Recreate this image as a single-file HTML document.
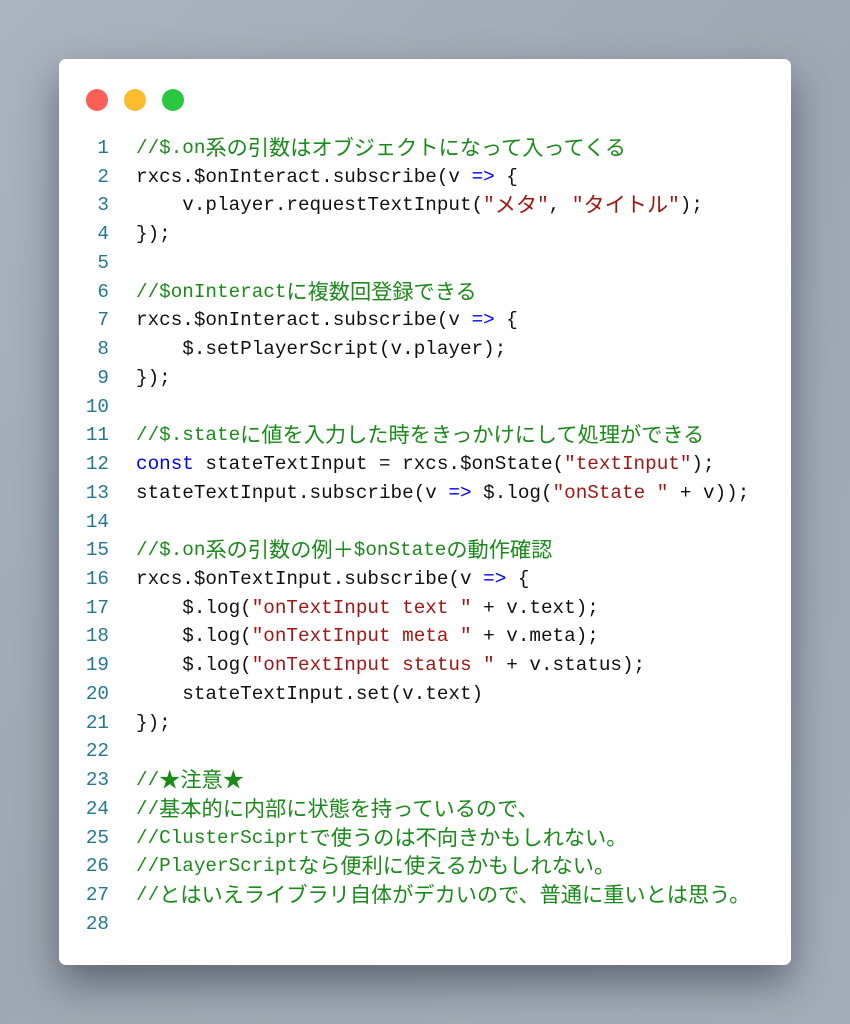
<!DOCTYPE html>
<html><head><meta charset="utf-8"><style>
html,body{margin:0;padding:0;}
body{width:850px;height:1024px;overflow:hidden;background:linear-gradient(135deg,#aab4be 0%,#9ea8b2 50%,#a4aeb8 100%);position:relative;}
.card{position:absolute;left:59px;top:59px;width:732px;height:906px;background:#fff;border-radius:7px;box-shadow:0 18px 40px rgba(40,48,58,.55);}
.dot{position:absolute;top:89px;width:22px;height:22px;border-radius:50%;}
.code{position:absolute;left:0;top:134px;width:850px;font-family:"Liberation Mono","Noto Sans CJK JP",monospace;font-size:19.3px;color:#111;}
.l{height:28.74px;line-height:28.74px;white-space:pre;position:relative;}
.n{position:absolute;left:60px;width:49px;text-align:right;color:#237893;}
.t{position:absolute;left:136px;}
.c{color:#1a8a1a}.k{color:#0000ff}.s{color:#a31515}
.j{font-family:"Noto Sans CJK JP",sans-serif;font-size:21.2px;line-height:0;position:relative;top:2px;}
</style></head><body>
<div class="card"></div>
<div class="dot" style="left:86px;background:#fd5f57"></div>
<div class="dot" style="left:124px;background:#febb2d"></div>
<div class="dot" style="left:162px;background:#28c840"></div>
<div class="code">
<div class="l"><span class="n">1</span><span class="t c">//$.on<span class="j">系の引数はオブジェクトになって入ってくる</span></span></div>
<div class="l"><span class="n">2</span><span class="t">rxcs.$onInteract.subscribe(v <span class="k">=&gt;</span> {</span></div>
<div class="l"><span class="n">3</span><span class="t">    v.player.requestTextInput(<span class="s">"<span class="j">メタ</span>"</span>, <span class="s">"<span class="j">タイトル</span>"</span>);</span></div>
<div class="l"><span class="n">4</span><span class="t">});</span></div>
<div class="l"><span class="n">5</span></div>
<div class="l"><span class="n">6</span><span class="t c">//$onInteract<span class="j">に複数回登録できる</span></span></div>
<div class="l"><span class="n">7</span><span class="t">rxcs.$onInteract.subscribe(v <span class="k">=&gt;</span> {</span></div>
<div class="l"><span class="n">8</span><span class="t">    $.setPlayerScript(v.player);</span></div>
<div class="l"><span class="n">9</span><span class="t">});</span></div>
<div class="l"><span class="n">10</span></div>
<div class="l"><span class="n">11</span><span class="t c">//$.state<span class="j">に値を入力した時をきっかけにして処理ができる</span></span></div>
<div class="l"><span class="n">12</span><span class="t"><span class="k">const</span> stateTextInput = rxcs.$onState(<span class="s">"textInput"</span>);</span></div>
<div class="l"><span class="n">13</span><span class="t">stateTextInput.subscribe(v <span class="k">=&gt;</span> $.log(<span class="s">"onState "</span> + v));</span></div>
<div class="l"><span class="n">14</span></div>
<div class="l"><span class="n">15</span><span class="t c">//$.on<span class="j">系の引数の例＋</span>$onState<span class="j">の動作確認</span></span></div>
<div class="l"><span class="n">16</span><span class="t">rxcs.$onTextInput.subscribe(v <span class="k">=&gt;</span> {</span></div>
<div class="l"><span class="n">17</span><span class="t">    $.log(<span class="s">"onTextInput text "</span> + v.text);</span></div>
<div class="l"><span class="n">18</span><span class="t">    $.log(<span class="s">"onTextInput meta "</span> + v.meta);</span></div>
<div class="l"><span class="n">19</span><span class="t">    $.log(<span class="s">"onTextInput status "</span> + v.status);</span></div>
<div class="l"><span class="n">20</span><span class="t">    stateTextInput.set(v.text)</span></div>
<div class="l"><span class="n">21</span><span class="t">});</span></div>
<div class="l"><span class="n">22</span></div>
<div class="l"><span class="n">23</span><span class="t c">//<span class="j">★注意★</span></span></div>
<div class="l"><span class="n">24</span><span class="t c">//<span class="j">基本的に内部に状態を持っているので、</span></span></div>
<div class="l"><span class="n">25</span><span class="t c">//ClusterSciprt<span class="j">で使うのは不向きかもしれない。</span></span></div>
<div class="l"><span class="n">26</span><span class="t c">//PlayerScript<span class="j">なら便利に使えるかもしれない。</span></span></div>
<div class="l"><span class="n">27</span><span class="t c">//<span class="j">とはいえライブラリ自体がデカいので、普通に重いとは思う。</span></span></div>
<div class="l"><span class="n">28</span></div>
</div>
</body></html>
